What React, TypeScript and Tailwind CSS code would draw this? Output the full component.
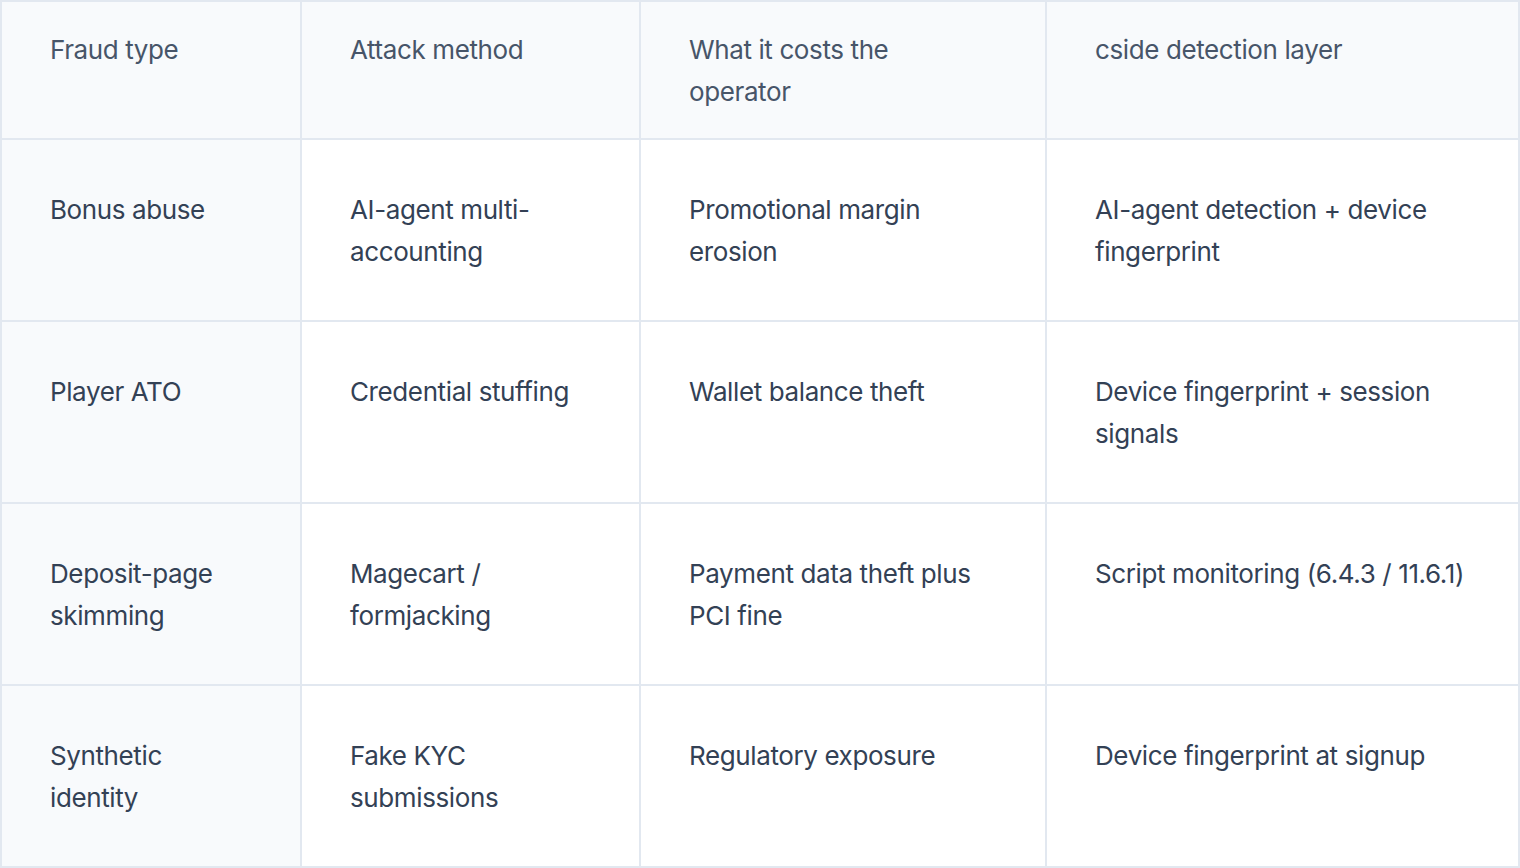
const headers = ["Fraud type", "Attack method", "What it costs the operator", "cside detection layer"];

const rows = [
  ["Bonus abuse", "AI-agent multi-accounting", "Promotional margin erosion", "AI-agent detection + device fingerprint"],
  ["Player ATO", "Credential stuffing", "Wallet balance theft", "Device fingerprint + session signals"],
  ["Deposit-page skimming", "Magecart / formjacking", "Payment data theft plus PCI fine", "Script monitoring (6.4.3 / 11.6.1)"],
  ["Synthetic identity", "Fake KYC submissions", "Regulatory exposure", "Device fingerprint at signup"],
];

export default function App() {
  return (
    <div className="w-[1520px] h-[868px] bg-white font-['Inter','Liberation_Sans',sans-serif] text-[26px] leading-[42px] tracking-[-0.015em]">
      <div className="grid grid-cols-[298px_337px_404px_471px] gap-[2px] bg-[#e2e8f0] p-[2px]">
        {headers.map((h) => (
          <div key={h} className="bg-[#f8fafc] pl-12 pr-[64px] pt-[27px] pb-[25px] text-[#475569]">
            {h}
          </div>
        ))}
        {rows.map((row) =>
          row.map((cell, i) => (
            <div
              key={row[0] + i}
              className={`px-12 pt-[49px] pb-[47px] text-[#334155] ${i === 0 ? "bg-[#f8fafc]" : "bg-white"}`}
            >
              {cell}
            </div>
          ))
        )}
      </div>
    </div>
  );
}
